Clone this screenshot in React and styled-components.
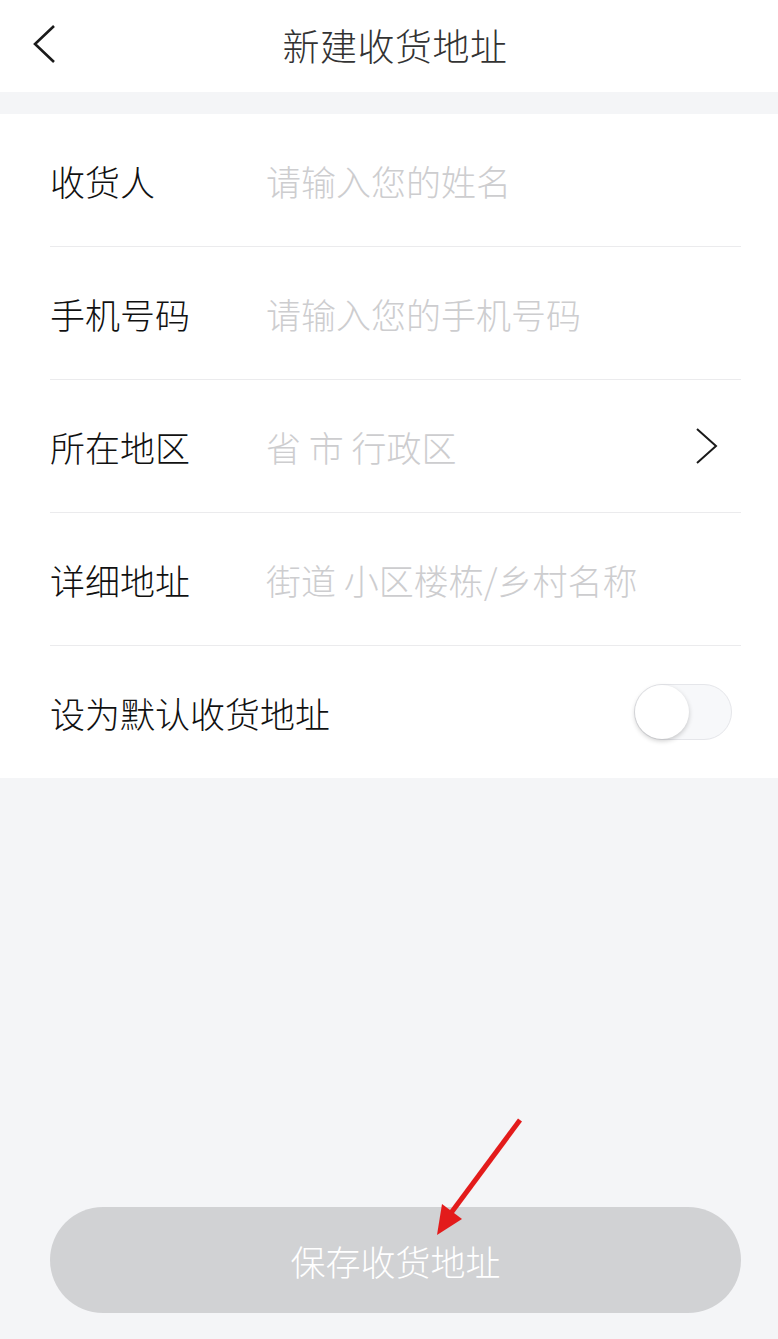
import React from 'react';
import styled, { createGlobalStyle } from 'styled-components';

const GlobalStyle = createGlobalStyle`
  html, body {
    margin: 0;
    padding: 0;
    background: #f4f5f7;
    font-family: "Noto Sans CJK SC", "Noto Sans", sans-serif;
  }
`;

const Page = styled.div`
  width: 778px;
  height: 1339px;
  display: flex;
  flex-direction: column;
  background: #f4f5f7;
  position: relative;
  overflow: hidden;
`;

const Header = styled.div`
  height: 92px;
  background: #fff;
  display: flex;
  align-items: center;
  justify-content: center;
  position: relative;
`;

const BackButton = styled.div`
  position: absolute;
  left: 30px;
  top: 24px;
  width: 30px;
  height: 40px;
`;

const Title = styled.h1`
  margin: 0 0 2px 12px;
  font-size: 37px;
  font-weight: 300;
  color: #333;
  letter-spacing: 0.5px;
`;

const Form = styled.div`
  margin-top: 22px;
  background: #fff;
  padding: 0 37px 0 50px;
`;

const Row = styled.div`
  height: 132px;
  display: flex;
  align-items: center;
  border-bottom: ${p => (p.$last ? 'none' : '1px solid #ebebed')};
`;

const Label = styled.div`
  width: 216px;
  font-size: 35px;
  font-weight: 300;
  color: #111;
  flex-shrink: 0;
  white-space: nowrap;
`;

const Placeholder = styled.div`
  flex: 1;
  font-size: 35px;
  font-weight: 300;
  color: #cdcdcf;
  white-space: nowrap;
`;

const Chevron = styled.div`
  width: 24px;
  height: 40px;
  margin-right: 22px;
`;

const Toggle = styled.div`
  width: 96px;
  height: 54px;
  margin-right: 9px;
  border-radius: 28px;
  background: #f7f8fa;
  border: 1px solid #e5e6ea;
  position: relative;
`;

const Knob = styled.div`
  position: absolute;
  left: 0;
  top: 0;
  width: 54px;
  height: 54px;
  border-radius: 50%;
  background: #fff;
  box-shadow: 0 2px 5px rgba(0, 0, 0, 0.2);
`;

const Spacer = styled.div`
  flex: 1;
`;

const Footer = styled.div`
  padding: 0 37px 26px 50px;
  position: relative;
`;

const SaveButton = styled.div`
  height: 106px;
  border-radius: 53px;
  background: #d1d2d4;
  color: #fff;
  font-size: 35px;
  font-weight: 300;
  display: flex;
  align-items: center;
  justify-content: center;
`;

const Arrow = styled.svg`
  position: absolute;
  left: 420px;
  top: -100px;
  width: 110px;
  height: 130px;
  pointer-events: none;
`;

const rows = [
  { label: '收货人', placeholder: '请输入您的姓名' },
  { label: '手机号码', placeholder: '请输入您的手机号码' },
  { label: '所在地区', placeholder: '省 市 行政区', arrow: true },
  { label: '详细地址', placeholder: '街道 小区楼栋/乡村名称' },
];

export default function App() {
  return (
    <Page>
      <GlobalStyle />
      <Header>
        <BackButton>
          <svg width="30" height="40" viewBox="0 0 30 40">
            <polyline points="24,2 5,20 24,38" fill="none" stroke="#1a1a1a" strokeWidth="2.6" />
          </svg>
        </BackButton>
        <Title>新建收货地址</Title>
      </Header>
      <Form>
        {rows.map(r => (
          <Row key={r.label}>
            <Label>{r.label}</Label>
            <Placeholder>{r.placeholder}</Placeholder>
            {r.arrow && (
              <Chevron>
                <svg width="24" height="40" viewBox="0 0 24 40">
                  <polyline points="2,3 21,20 2,37" fill="none" stroke="#1a1a1a" strokeWidth="2" />
                </svg>
              </Chevron>
            )}
          </Row>
        ))}
        <Row $last>
          <Label>设为默认收货地址</Label>
          <Spacer />
          <Toggle>
            <Knob />
          </Toggle>
        </Row>
      </Form>
      <Spacer />
      <Footer>
        <Arrow viewBox="0 0 110 130">
          <line x1="100" y1="13" x2="28" y2="110" stroke="#e31b1b" strokeWidth="5" />
          <polygon points="17,128 22,97 42,112" fill="#e31b1b" />
        </Arrow>
        <SaveButton>保存收货地址</SaveButton>
      </Footer>
    </Page>
  );
}
